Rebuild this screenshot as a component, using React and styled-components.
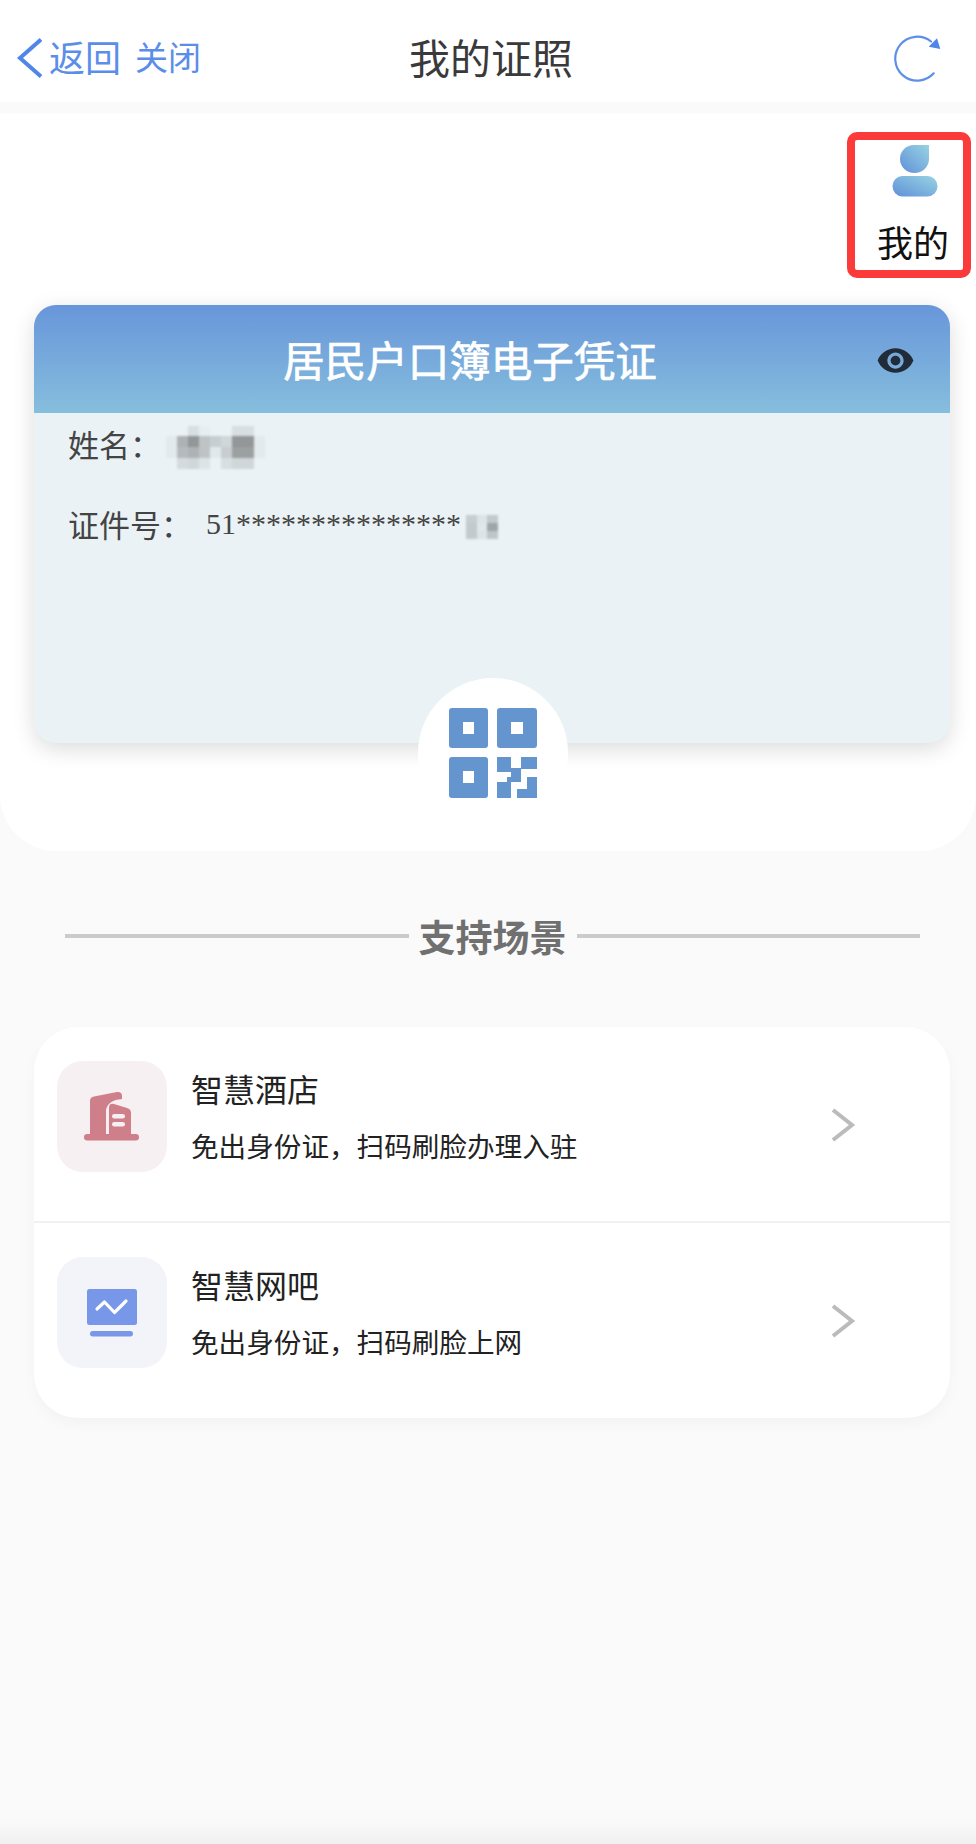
import React from "react";
import styled, { createGlobalStyle } from "styled-components";

const cjk = `"Noto Sans CJK SC", "Noto Sans", sans-serif`;

const GlobalStyle = createGlobalStyle`
	html, body {
		margin: 0;
		padding: 0;
		background: #fafafa;
		font-family: ${cjk};
	}
	* {
		box-sizing: border-box;
	}
`;

const nameCells = [
	[0, 0, .1, .02, 0, 0, .1, .1, 0],
	[.04, .35, .5, .25, .2, .15, .5, .5, .04],
	[.04, .3, .35, .25, .05, .2, .45, .45, .04],
	[0, .12, .15, .08, 0, .1, .15, .15, 0]
];

const idCells = [
	[.2, .08, .22],
	[.22, .06, .42],
	[.22, .08, .24]
];

const scenes = [
	{ title: "智慧酒店", desc: "免出身份证，扫码刷脸办理入驻", tone: "#f6f0f3", icon: <HotelIcon /> },
	{ title: "智慧网吧", desc: "免出身份证，扫码刷脸上网", tone: "#f3f4fa", icon: <ScreenIcon /> }
];

function HotelIcon() {
	return (
		<svg width="60" height="54" viewBox="0 0 60 54">
			<g fill="#cf7f8a">
				<path d="M8 46V11Q8 7 12 6.5L35 2Q40 1.5 40 6V9Q26 10 24 20V46Z" />
				<path d="M27 46V18Q27 13 32 14L45 18Q49 19 49 23V46Z" />
				<rect x="2" y="44" width="55" height="6.5" rx="3.2" />
			</g>
			<rect x="30" y="24" width="13" height="4.5" rx="2.2" fill="#f6f0f3" />
			<rect x="30" y="32" width="13" height="4.5" rx="2.2" fill="#f6f0f3" />
		</svg>
	);
}

function ScreenIcon() {
	return (
		<svg width="52" height="48" viewBox="0 0 52 48">
			<rect x="1" y="0" width="50" height="36" rx="2.5" fill="#7897e8" />
			<rect x="4" y="42" width="43" height="5.5" rx="2.7" fill="#7897e8" />
			<path d="M11 20L18.5 13L28.5 23.5L40 12" fill="none" stroke="#fff" strokeWidth="3.2" strokeLinecap="round" strokeLinejoin="round" />
		</svg>
	);
}

const App = () => (
	<Page>
		<GlobalStyle />
		<TopBar>
			<BackGroup>
				<BackArrow width="28" height="42" viewBox="0 0 28 42">
					<path d="M25 2.5L4 21L25 39.5" fill="none" stroke="#4f86e8" strokeWidth="4" />
				</BackArrow>
				<BackText>返回</BackText>
				<CloseText>关闭</CloseText>
			</BackGroup>
			<PageTitle>我的证照</PageTitle>
			<RefreshIcon width="48" height="48" viewBox="0 0 48 48">
				<path d="M39.7 39.3A22 22 0 1 1 37 7.5" fill="none" stroke="#5c8fe8" strokeWidth="2.2" strokeLinecap="round" />
				<path d="M46.3 15L34.7 12.7L43 4.3Z" fill="#4f86e8" />
			</RefreshIcon>
		</TopBar>

		<Panel>
			<MineBox>
				<MineIcon width="46" height="52" viewBox="0 0 46 52">
					<defs>
						<linearGradient id="mine" x1="0" y1="1" x2="1" y2="0">
							<stop offset="0" stopColor="#5f90d8" />
							<stop offset="1" stopColor="#98d3e2" />
						</linearGradient>
					</defs>
					<path d="M8 14A14 14 0 0 1 22 0H37V14A14.5 14 0 0 1 8 14Z" fill="url(#mine)" />
					<rect x="0.5" y="31" width="45" height="20.5" rx="10" fill="url(#mine)" />
				</MineIcon>
				<MineLabel>我的</MineLabel>
			</MineBox>

			<IdCard>
				<CardHead>
					<CardTitle>居民户口簿电子凭证</CardTitle>
					<EyeIcon viewBox="0 0 24 24">
						<path d="M12 4.5C7 4.5 2.73 7.61 1 12c1.73 4.39 6 7.5 11 7.5s9.27-3.11 11-7.5c-1.73-4.39-6-7.5-11-7.5zM12 17c-2.76 0-5-2.24-5-5s2.24-5 5-5 5 2.24 5 5-2.24 5-5 5zm0-8c-1.66 0-3 1.34-3 3s1.34 3 3 3 3-1.34 3-3-1.34-3-3-3z" />
					</EyeIcon>
				</CardHead>
				<CardBody>
					<InfoRow>
						<InfoLabel>姓名：</InfoLabel>
						<Mosaic $cols={9} $w={11} $h={10.75} $left={5} $top={6}>
							{nameCells.flat().map((v, i) => <MosaicCell key={i} $alpha={v} />)}
						</Mosaic>
					</InfoRow>
					<IdRow>
						<InfoLabel>证件号：</InfoLabel>
						<IdNumber>51***************</IdNumber>
						<Mosaic $cols={3} $w={10.7} $h={8} $left={5} $top={5}>
							{idCells.flat().map((v, i) => <MosaicCell key={i} $alpha={v} />)}
						</Mosaic>
					</IdRow>
				</CardBody>
				<QrBadge>
					<svg width="88" height="90" viewBox="0 0 88 90">
						<path fill="#6495cf" fillRule="evenodd" d="M3 0H36Q39 0 39 3V37Q39 40 36 40H3Q0 40 0 37V3Q0 0 3 0ZM14 14V26H25V14Z" />
						<path fill="#6495cf" fillRule="evenodd" d="M51 0H85Q88 0 88 3V37Q88 40 85 40H51Q48 40 48 37V3Q48 0 51 0ZM62 14V26H74V14Z" />
						<path fill="#6495cf" fillRule="evenodd" d="M3 49H36Q39 49 39 52V87Q39 90 36 90H3Q0 90 0 87V52Q0 49 3 49ZM14 63V75H25V63Z" />
						<path fill="#6495cf" d="M48 49H62V64H48ZM72 49H88V61H72ZM62 60H72V72H62ZM48 74H58V69H72V74H62V90H48ZM78 69H88V90H68V81H78Z" />
					</svg>
				</QrBadge>
			</IdCard>
		</Panel>

		<SectionTitle>
			<Rule />
			<SectionText>支持场景</SectionText>
			<Rule />
		</SectionTitle>

		<SceneList>
			{scenes.map(s => (
				<SceneRow key={s.title}>
					<SceneIcon $tone={s.tone}>{s.icon}</SceneIcon>
					<SceneText>
						<SceneTitle>{s.title}</SceneTitle>
						<SceneDesc>{s.desc}</SceneDesc>
					</SceneText>
					<SceneArrow width="26" height="36" viewBox="0 0 26 36">
						<path d="M3 3L22 18L3 33" fill="none" stroke="#bbb" strokeWidth="4" />
					</SceneArrow>
				</SceneRow>
			))}
		</SceneList>
	</Page>
);

export default App;

const Page = styled.div`
	width: 976px;
	min-height: 1844px;
	background: linear-gradient(180deg, #fafafa calc(100% - 26px), #f1f1f1 100%);
	overflow: hidden;
`;

const TopBar = styled.header`
	position: relative;
	height: 102px;
	background: #fff;
	display: flex;
	align-items: center;
	justify-content: space-between;
	padding: 9px 34px 0 16px;
`;

const BackGroup = styled.div`
	display: flex;
	align-items: center;
`;

const BackArrow = styled.svg`
	margin-top: 4px;
`;

const BackText = styled.span`
	font-size: 36px;
	line-height: 44px;
	color: #5b8ee8;
	margin-left: 5px;
`;

const CloseText = styled.span`
	font-size: 33px;
	line-height: 44px;
	color: #5b8ee8;
	margin-left: 14px;
`;

const PageTitle = styled.h1`
	position: absolute;
	left: 6px;
	right: 0;
	margin: 0;
	text-align: center;
	font-size: 41px;
	font-weight: 400;
	line-height: 56px;
	color: #3a3a3a;
`;

const RefreshIcon = styled.svg`
	margin-top: 5px;
`;

const Panel = styled.section`
	margin-top: 11px;
	height: 738px;
	background: #fff;
	border-radius: 0 0 56px 56px;
	padding: 19px 26px 0 34px;
	display: flex;
	flex-direction: column;
`;

const MineBox = styled.div`
	align-self: flex-end;
	width: 124px;
	height: 146px;
	margin-right: -21px;
	border: 8px solid #fb3a3a;
	border-radius: 10px;
	display: flex;
	flex-direction: column;
	align-items: center;
	padding-top: 5px;
`;

const MineIcon = styled.svg`
	margin-left: 11px;
	flex-shrink: 0;
`;

const MineLabel = styled.span`
	font-size: 36px;
	line-height: 50px;
	color: #111;
	margin-top: 19px;
	margin-left: 8px;
	white-space: nowrap;
`;

const IdCard = styled.div`
	position: relative;
	margin-top: 27px;
	height: 438px;
	border-radius: 22px;
	background: #eaf2f5;
	box-shadow: 0 6px 22px rgba(0, 0, 0, 0.14);
`;

const CardHead = styled.div`
	position: relative;
	height: 108px;
	border-radius: 22px 22px 0 0;
	background: linear-gradient(180deg, #6896da 0%, #86bedd 100%);
	display: flex;
	align-items: center;
	justify-content: center;
	padding-right: 44px;
`;

const CardTitle = styled.h2`
	margin: 0;
	font-size: 41.5px;
	font-weight: 400;
	line-height: 56px;
	color: #fff;
	-webkit-text-stroke: 0.7px #fff;
`;

const EyeIcon = styled.svg`
	position: absolute;
	right: 35px;
	top: 36px;
	width: 39px;
	height: 39px;
	fill: #222c38;
`;

const CardBody = styled.div`
	padding: 9px 0 0 34px;
	display: flex;
	flex-direction: column;
`;

const InfoRow = styled.div`
	display: flex;
	align-items: center;
	height: 44px;
`;

const IdRow = styled(InfoRow)`
	margin-top: 36px;
`;

const InfoLabel = styled.span`
	font-size: 31px;
	line-height: 44px;
	color: #444;
	white-space: nowrap;
`;

const IdNumber = styled.span`
	font-family: "Liberation Serif", serif;
	font-size: 30px;
	line-height: 44px;
	color: #444;
	margin-left: 14px;
`;

const Mosaic = styled.div`
	display: grid;
	grid-template-columns: repeat(${p => p.$cols}, ${p => p.$w}px);
	grid-auto-rows: ${p => p.$h}px;
	margin-left: ${p => p.$left}px;
	margin-top: ${p => p.$top}px;
	filter: blur(1.2px);
`;

const MosaicCell = styled.i`
	background: rgba(60, 60, 60, ${p => p.$alpha});
`;

const QrBadge = styled.div`
	position: absolute;
	left: 384px;
	top: 373px;
	width: 150px;
	height: 150px;
	border-radius: 50%;
	background: #fff;
	display: flex;
	align-items: center;
	justify-content: center;
`;

const SectionTitle = styled.div`
	margin: 60px 56px 0 65px;
	height: 50px;
	display: flex;
	align-items: center;
	gap: 10px;
`;

const Rule = styled.div`
	flex: 1;
	height: 4px;
	background: #cbcbcb;
`;

const SectionText = styled.span`
	font-size: 37px;
	font-weight: 700;
	line-height: 50px;
	color: #707070;
`;

const SceneList = styled.div`
	margin: 66px 26px 0 34px;
	border-radius: 44px;
	background: #fff;
	box-shadow: 0 6px 14px rgba(0, 0, 0, 0.03);
`;

const SceneRow = styled.div`
	height: 194px;
	display: flex;
	align-items: flex-start;
	padding: 34px 94px 0 23px;

	& + & {
		height: 197px;
		border-top: 2px solid #f1f1f1;
	}
`;

const SceneIcon = styled.div`
	width: 110px;
	height: 111px;
	border-radius: 26px;
	background: ${p => p.$tone};
	display: flex;
	align-items: center;
	justify-content: center;
	flex-shrink: 0;
`;

const SceneText = styled.div`
	flex: 1;
	margin: 4px 0 0 24px;
`;

const SceneTitle = styled.div`
	font-size: 32px;
	line-height: 46px;
	color: #222;
`;

const SceneDesc = styled.div`
	font-size: 27.6px;
	line-height: 40px;
	color: #222;
	margin-top: 14px;
`;

const SceneArrow = styled.svg`
	margin-top: 46px;
	flex-shrink: 0;
`;
